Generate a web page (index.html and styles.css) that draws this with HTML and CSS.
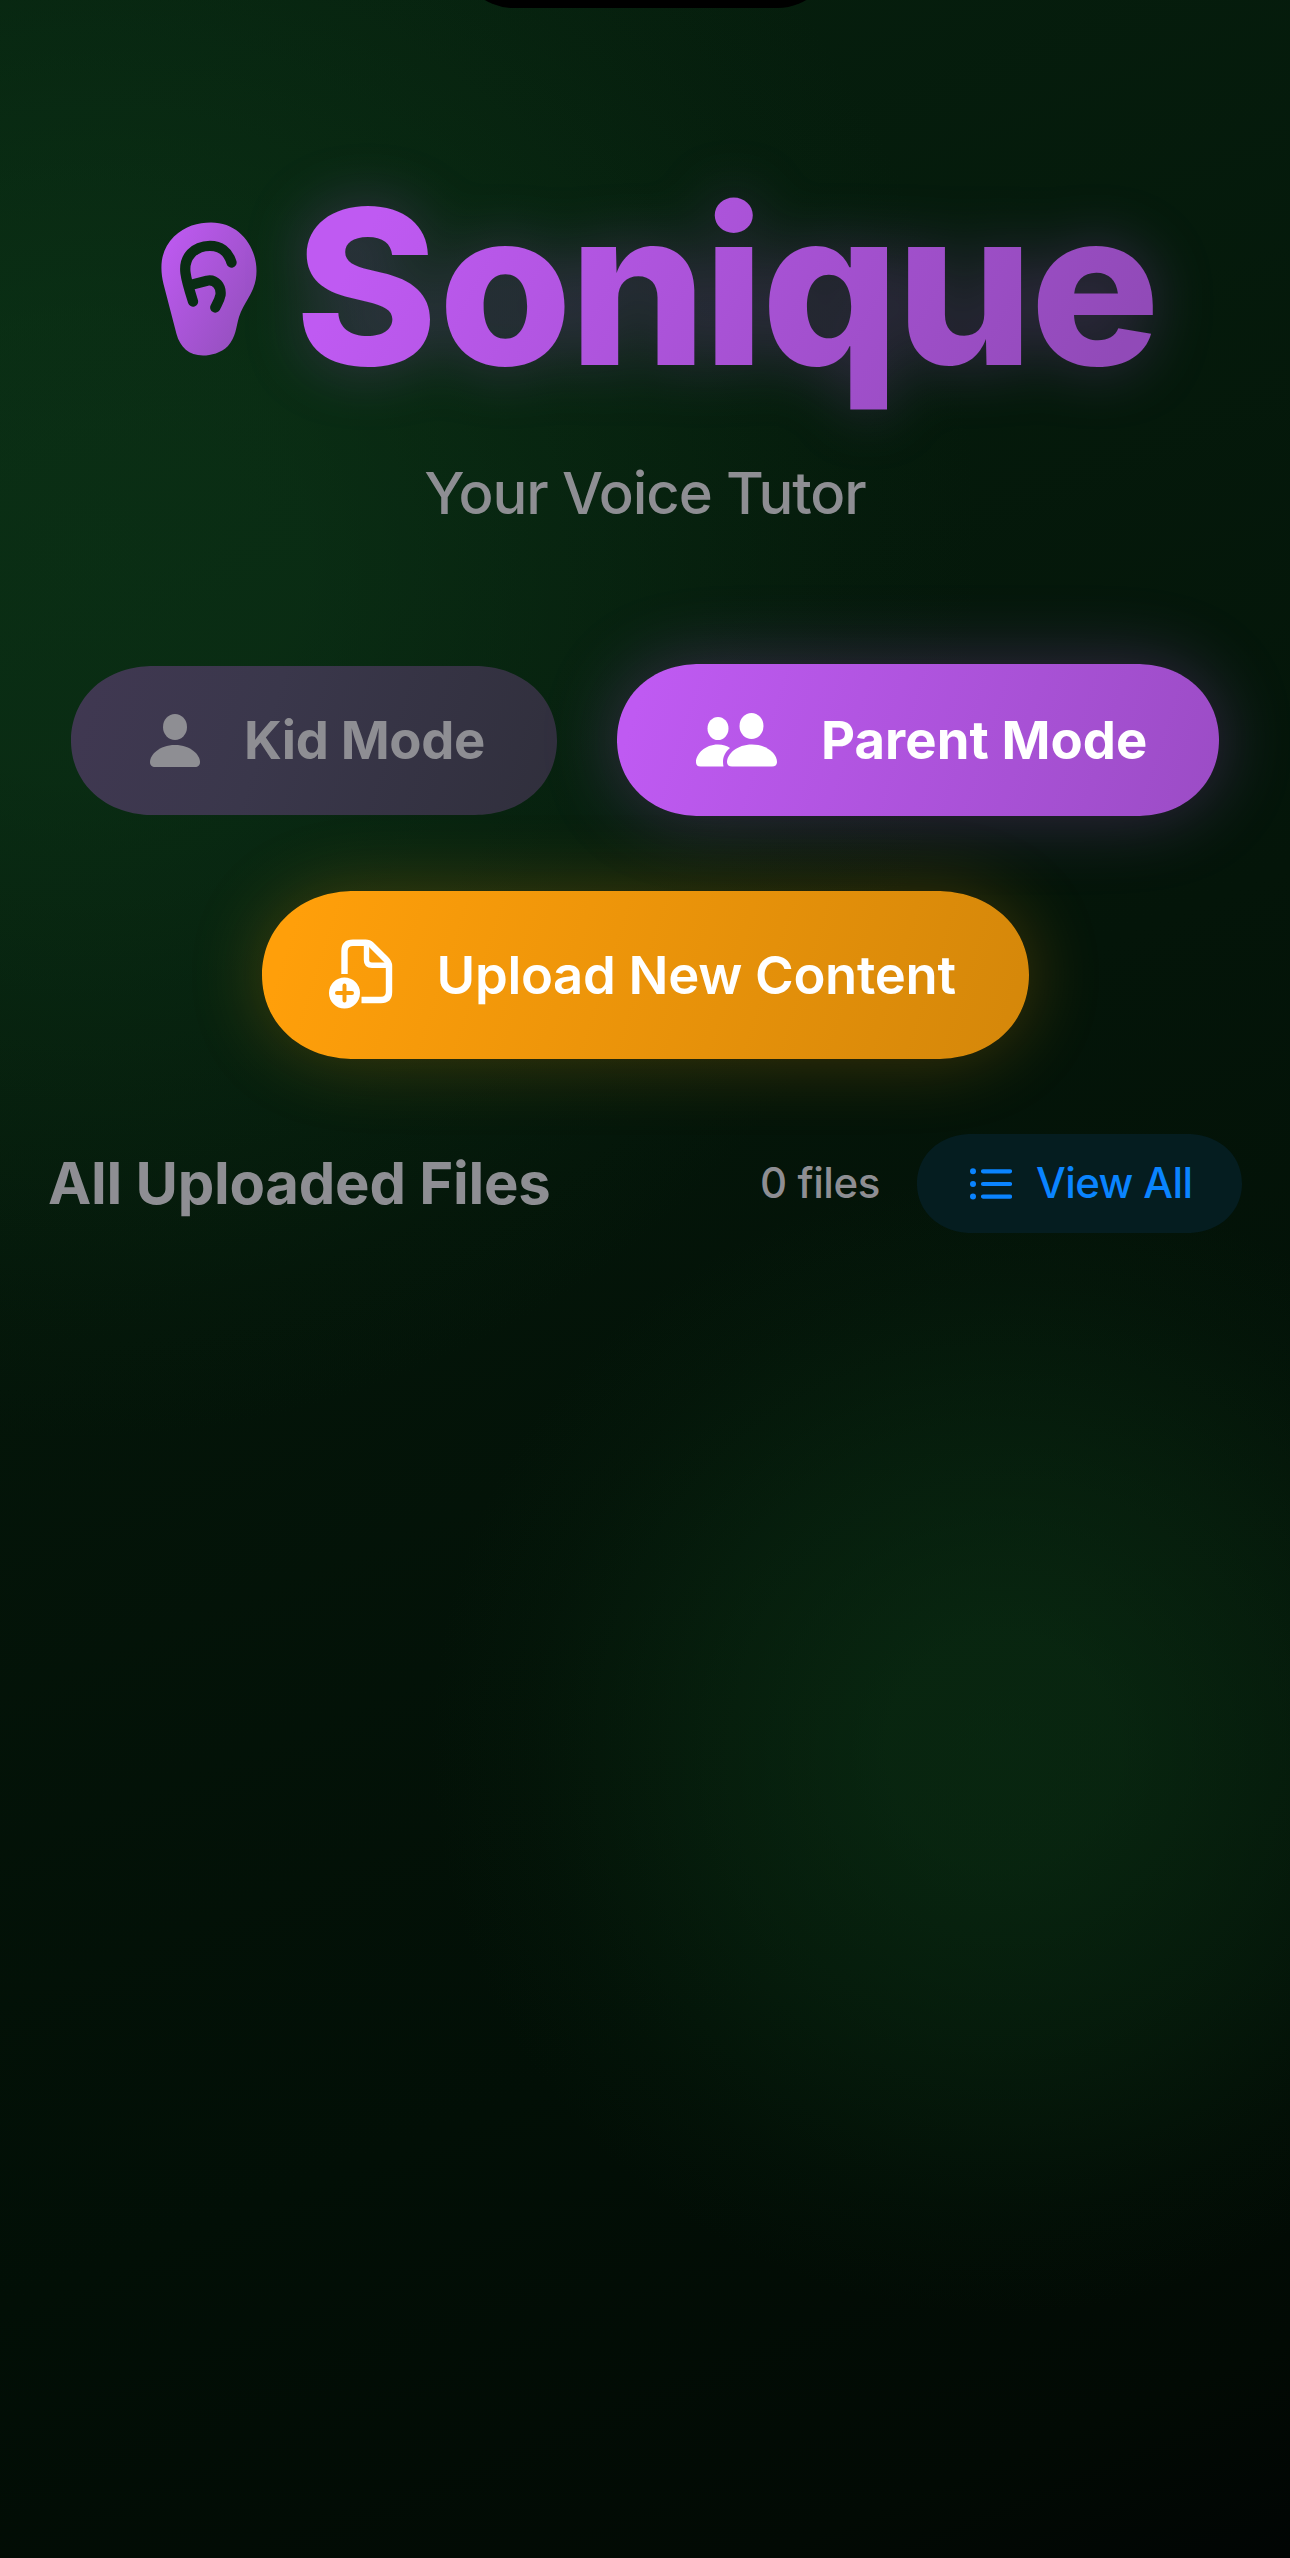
FILE: index.html
```html
<!DOCTYPE html>
<html lang="en">
<head>
<meta charset="utf-8">
<title>Sonique</title>
<link rel="stylesheet" href="styles.css">
</head>
<body>
<main class="screen">
  <div class="island-slot"><div class="island"></div></div>

  <header class="hero">
    <div class="brand">
      <svg class="ear" viewBox="0 0 96 134" aria-hidden="true">
        <defs>
          <linearGradient id="earFill" x1="0" y1="0.1" x2="1" y2="0.9">
            <stop offset="0" stop-color="#bf5af2"/>
            <stop offset="1" stop-color="#914fba"/>
          </linearGradient>
          <mask id="earMask">
            <rect width="96" height="134" fill="#fff"/>
            <path d="M70.500 40.500C67 29 59 23.800 49 23.800C33 24 22.500 35 24.500 51C25.500 59 29 70 32 79.500M27.500 63.500L46 58.700C55 57 60.500 65 59.500 73C58.500 78 57 80 54.300 85.500" fill="none" stroke="#000" stroke-width="10.300" stroke-linecap="round" stroke-linejoin="round"/>
          </mask>
        </defs>
        <path d="M50 .5C78 .5 95.500 24 95.500 49C95.500 70 83 79 78 95C75 105 75 115 67 124C60 131 50 133.500 42 133.500C28 133.500 19 125 15.500 112L2.500 62C-2 43 .5 27 13 14.500C24 4 37 .5 50 .5Z" fill="url(#earFill)" mask="url(#earMask)"/>
      </svg>
      <h1 class="wordmark"><span class="wordmark-initial">S</span>onique</h1>
    </div>
    <p class="tagline">Your Voice Tutor</p>
  </header>

  <nav class="modes">
    <button class="pill mode mode-kid">
      <svg class="icon-person" viewBox="0 0 50 53" aria-hidden="true">
        <ellipse cx="25" cy="13" rx="12" ry="13"/>
        <path d="M5 53C2 53 0 51.500 0 48C0 41 9 31 25 31S50 41 50 48C50 51.500 48 53 45 53Z"/>
      </svg>
      <span class="label-kid">Kid Mode</span>
    </button>
    <button class="pill mode mode-parent">
      <svg class="icon-people" viewBox="0 0 81 54" aria-hidden="true">
        <ellipse cx="22" cy="15.500" rx="10.500" ry="11.500"/>
        <ellipse cx="55.500" cy="13" rx="12" ry="13"/>
        <path d="M4.500 53.500C1.500 53.500 0 52 0 49C0 41 9 31.500 22 31.500C27 31.500 31 33 34 35C28 40 26 46 27.500 53.500Z"/>
        <path d="M36 53.500C33 53.500 31 52 31 49C31 41 41 31.500 56 31.500S81 41 81 49C81 52 79 53.500 76 53.500Z"/>
      </svg>
      <span class="label-parent">Parent Mode</span>
    </button>
  </nav>

  <button class="pill upload">
    <svg class="icon-upload" viewBox="0 0 64 70" aria-hidden="true">
      <path d="M15.500 35V12Q15.500 3.700 24 3.700H36.500Q40 3.700 42.500 6L57 20.500Q60 23.500 60 27V53Q60 61 52 61H32.500" fill="none" stroke="#fff" stroke-width="6.400"/>
      <path d="M37.500 4V21Q37.500 26.200 43 26.200H60" fill="none" stroke="#fff" stroke-width="5.400"/>
      <circle cx="15.500" cy="54" r="15.500" fill="#fff"/>
      <path d="M15.500 46.500V61.500M8 54H23" stroke="#f99c0c" stroke-width="4" stroke-linecap="round"/>
    </svg>
    <span class="label-upload">Upload New Content</span>
  </button>

  <section class="files">
    <h2 class="files-title">All Uploaded Files</h2>
    <span class="files-count">0 files</span>
    <button class="pill view-all">
      <svg class="icon-list" viewBox="0 0 42 32" aria-hidden="true">
        <circle cx="3" cy="3.300" r="3"/><circle cx="3" cy="16" r="3"/><circle cx="3" cy="28.600" r="3"/>
        <path d="M13 3.300H40M13 16H40M13 28.600H40" stroke-width="4.200" stroke-linecap="round"/>
      </svg>
      <span class="label-view">View All</span>
    </button>
  </section>
</main>
</body>
</html>
```
FILE: styles.css
```css
* {
  box-sizing: border-box;
}

body {
  margin: 0;
  background: #000;
  font-family: Inter, "Liberation Sans", sans-serif;
  color: #8e8e93;
}

.screen {
  width: 1290px;
  height: 2558px;
  overflow: hidden;
  display: flex;
  flex-direction: column;
  background:
    radial-gradient(circle 570px at 1000px 1745px, rgba(16, 66, 28, .44) 0, rgba(16, 66, 28, .42) 20%, rgba(16, 66, 28, .26) 52%, rgba(16, 66, 28, .07) 82%, rgba(16, 66, 28, 0) 100%),
    radial-gradient(circle 900px at 80px 540px, rgba(16, 68, 30, .46) 0, rgba(16, 68, 30, .43) 25%, rgba(16, 68, 30, .22) 60%, rgba(16, 68, 30, .06) 85%, rgba(16, 68, 30, 0) 100%),
    linear-gradient(158deg, #06200e 0, #041509 45%, #020f06 75%, #020a04 93%, #010504 100%);
}

.island-slot {
  height: 8px;
  overflow: hidden;
  display: flex;
  justify-content: center;
  align-items: flex-end;
}

.island {
  flex: none;
  width: 375px;
  height: 111px;
  border-radius: 56px;
  background: #000;
}

.hero {
  display: flex;
  flex-direction: column;
  align-items: center;
}

.brand {
  width: 100%;
  height: 392px;
  padding-left: 161px;
  display: flex;
  align-items: flex-start;
}

.ear {
  width: 96px;
  height: 134px;
  margin-top: 214px;
}

.wordmark {
  margin: 147px 0 0 28px;
  padding: 0 10px;
  font-size: 216px;
  font-weight: 800;
  line-height: 264px;
  letter-spacing: -3.100px;
  color: transparent;
  background: linear-gradient(118deg, #bf5af2 12%, #914ab8 92%);
  background-clip: text;
  -webkit-background-clip: text;
  filter: drop-shadow(0 0 30px rgba(191, 90, 242, .28));
}

.wordmark-initial {
  letter-spacing: 1px;
}

.tagline {
  margin: 58px 0 0;
  font-size: 58px;
  font-weight: 450;
  line-height: 70px;
  letter-spacing: -1.100px;
}

.pill {
  border: 0;
  padding: 0;
  display: flex;
  align-items: center;
  font-family: inherit;
  white-space: nowrap;
  border-radius: 84px;
}

@supports (corner-shape: superellipse(1.06)) {
  .pill {
    border-radius: 82px / 50%;
    corner-shape: superellipse(1.06);
  }

  .pill.upload {
    border-radius: 92px / 50%;
  }

  .pill.view-all {
    border-radius: 55px / 50%;
  }
}

.modes {
  margin-top: 136px;
  padding-left: 71px;
  display: flex;
  align-items: center;
  gap: 60px;
}

.mode {
  font-size: 52.600px;
  font-weight: 700;
}

.mode-kid {
  width: 486px;
  height: 149px;
  padding-left: 79px;
  color: #8e8e93;
  background: linear-gradient(108deg, #403852 0, #3a374b 40%, #302f3c 100%);
}

.mode-parent {
  width: 602px;
  height: 152px;
  padding-left: 79px;
  color: #fff;
  background: linear-gradient(108deg, #bf5af2 5%, #9b4cc5 100%);
  box-shadow: 0 0 76px rgba(191, 90, 242, .27);
}

.icon-person {
  width: 50px;
  height: 53px;
  fill: currentColor;
}

.icon-people {
  width: 81px;
  height: 54px;
  fill: currentColor;
}

.label-kid {
  margin-left: 44px;
  letter-spacing: -.350px;
}

.label-parent {
  margin-left: 44px;
  letter-spacing: .080px;
}

.upload {
  align-self: center;
  width: 767px;
  height: 168px;
  margin-top: 75px;
  padding-left: 67px;
  font-size: 52.600px;
  font-weight: 600;
  color: #fff;
  background: linear-gradient(108deg, #ff9f0a 5%, #d4870a 100%);
  box-shadow: 0 0 76px rgba(255, 159, 10, .24);
}

.icon-upload {
  width: 64px;
  height: 70px;
  margin-top: -2px;
}

.label-upload {
  margin-left: 44px;
  letter-spacing: -.300px;
}

.files {
  margin-top: 75px;
  padding: 0 48px;
  height: 99px;
  display: flex;
  align-items: center;
}

.files-title {
  margin: 0 0 1px;
  flex: 1;
  font-size: 58px;
  font-weight: 700;
  letter-spacing: -.250px;
}

.files-count {
  margin: 0 37px 2px 0;
  font-size: 42px;
  font-weight: 450;
  letter-spacing: -.400px;
}

.view-all {
  width: 325px;
  height: 99px;
  padding-left: 53px;
  font-size: 42px;
  font-weight: 500;
  color: #0a84ff;
  background: #051d20;
}

.icon-list {
  width: 42px;
  height: 32px;
  fill: currentColor;
  stroke: currentColor;
  stroke-width: 0;
}

.label-view {
  margin: 0 0 2px 24px;
  letter-spacing: -.600px;
}
```
